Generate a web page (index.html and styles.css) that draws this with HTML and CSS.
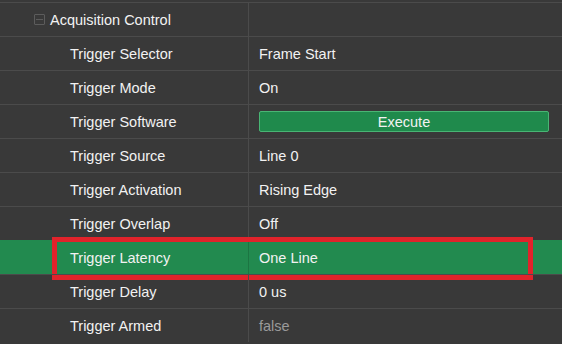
FILE: index.html
```html
<!DOCTYPE html>
<html lang="en">
<head>
  <meta charset="UTF-8" />
  <title>Acquisition Control</title>
  <link rel="stylesheet" href="styles.css">
</head>
<body>
  <div class="grid">
    <div class="row group">
      <div class="name"><span class="toggle"></span>Acquisition Control</div>
      <div class="value"></div>
    </div>
    <div class="row">
      <div class="name">Trigger Selector</div>
      <div class="value">Frame Start</div>
    </div>
    <div class="row">
      <div class="name">Trigger Mode</div>
      <div class="value">On</div>
    </div>
    <div class="row">
      <div class="name">Trigger Software</div>
      <div class="value"><button class="exec">Execute</button></div>
    </div>
    <div class="row">
      <div class="name">Trigger Source</div>
      <div class="value">Line 0</div>
    </div>
    <div class="row">
      <div class="name">Trigger Activation</div>
      <div class="value">Rising Edge</div>
    </div>
    <div class="row">
      <div class="name">Trigger Overlap</div>
      <div class="value">Off</div>
    </div>
    <div class="row selected">
      <div class="name">Trigger Latency</div>
      <div class="value">One Line</div>
      <div class="mark"></div>
    </div>
    <div class="row">
      <div class="name">Trigger Delay</div>
      <div class="value">0 us</div>
    </div>
    <div class="row">
      <div class="name">Trigger Armed</div>
      <div class="value readonly">false</div>
    </div>
  </div>
</body>
</html>
```

FILE: styles.css
```css
body {
  margin: 0;
  background-color: #393939;
  color: #f2f2f2;
  font-family: 'Liberation Sans', Arial, sans-serif;
  font-size: 14.5px;
  overflow: hidden;
}

.grid {
  padding-top: 2px;
}

.row {
  position: relative;
  display: flex;
  height: 33px;
  border-top: 1px solid #4b4b4b;
}

.name {
  width: 249px;
  flex-shrink: 0;
  display: flex;
  align-items: center;
  padding-left: 70px;
  box-sizing: border-box;
  border-right: 1px solid #4b4b4b;
}

.value {
  flex: 1;
  display: flex;
  align-items: center;
  padding: 0 13px 0 10px;
}

.group .name {
  padding-left: 34px;
}

.toggle {
  width: 11px;
  height: 11px;
  box-sizing: border-box;
  border: 1px solid #5c5c5c;
  border-radius: 1px;
  margin-right: 5px;
  margin-top: -1px;
  position: relative;
}

.toggle::after {
  content: "";
  position: absolute;
  left: 1px;
  right: 1px;
  top: 4px;
  height: 1px;
  background-color: #5c5c5c;
}

.exec {
  width: 100%;
  height: 21px;
  margin-top: 0;
  padding: 0;
  font-family: inherit;
  font-size: 14.5px;
  color: #f2f2f2;
  background-color: #1f8a4c;
  border: 1px solid #49b574;
  border-radius: 2px;
}

.selected {
  background-color: #228a4f;
  border-top-color: #228a4f;
}

.selected .name {
  border-right-color: #1c7542;
}

.readonly {
  color: #9a9a9a;
}

.mark {
  position: absolute;
  left: 52px;
  top: -4px;
  width: 481px;
  height: 43px;
  box-sizing: border-box;
  border: 5px solid #e1232b;
}
```
